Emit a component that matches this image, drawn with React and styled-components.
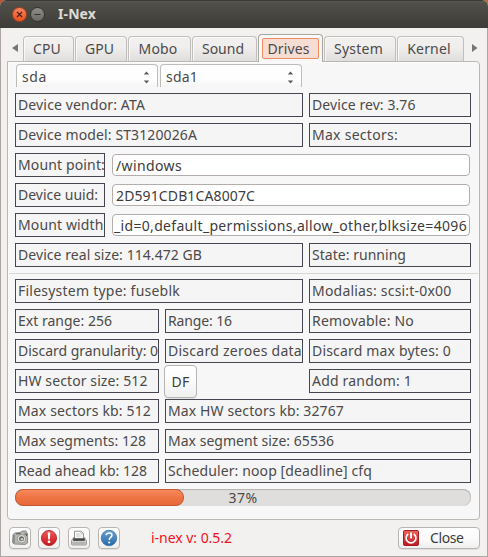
import React, { useLayoutEffect, useRef, useState } from "react";
import styled, { createGlobalStyle, css } from "styled-components";

const Global = createGlobalStyle`
  * { box-sizing: border-box; }
  html, body { margin: 0; background: linear-gradient(90deg, #c0503a, #b96a3c); overflow: hidden; }
  button { font: inherit; color: inherit; padding: 0; margin: 0; }
`;

const Window = styled.div`
  width: 488px;
  height: 557px;
  display: flex;
  flex-direction: column;
  background: #f2f1f0;
  border-radius: 6px 6px 0 0;
  overflow: hidden;
  font-family: "Noto Sans", "Open Sans", sans-serif;
  font-size: 14px;
  line-height: 20px;
  color: #4c4a4a;
  white-space: nowrap;
`;

const TitleBar = styled.header`
  flex: none;
  height: 28px;
  display: flex;
  align-items: center;
  padding-left: 12px;
  background: linear-gradient(#5b5954 0, #504f49 2px, #3d3c38 100%);
  border-top: 1px solid #3a3935;
  color: #dfdbd2;
  font-weight: 700;
  font-size: 14px;
`;

const WindowButton = styled.button`
  width: 15px;
  height: 15px;
  margin-right: 3px;
  border-radius: 50%;
  border: 1px solid ${(p) => (p.$close ? "#a8401f" : "#33322f")};
  background: ${(p) =>
    p.$close
      ? "linear-gradient(#f5835f, #e9531f)"
      : "linear-gradient(#8f8d86, #6b6a64)"};
  display: grid;
  place-items: center;
`;

const Title = styled.h1`
  margin: 0 0 1px 10px;
  font: inherit;
`;

const Body = styled.main`
  flex: 1;
  min-height: 0;
  padding: 6px 7px 0 6px;
  border: 1px solid #aca5a2;
  border-top: 0;
  display: flex;
  flex-direction: column;
`;

const TabBar = styled.nav`
  height: 28px;
  display: flex;
  align-items: flex-end;
  gap: 1px;
  margin-bottom: -1px;
  position: relative;
`;

const Scroll = styled.span`
  width: 15px;
  height: 28px;
  display: flex;
  align-items: center;
  justify-content: ${(p) => (p.$end ? "flex-end" : "center")};
  padding-right: ${(p) => (p.$end ? 2 : 0)}px;
`;

const Tab = styled.button`
  width: ${(p) => p.$width}px;
  height: ${(p) => (p.$active ? 28 : 26)}px;
  padding: ${(p) => (p.$active ? "3px" : "0 3px 0 0")};
  border: 1px solid ${(p) => (p.$active ? "#aaa59c" : "#c1bfbc")};
  border-bottom: ${(p) => (p.$active ? "0" : "1px solid #b9b6b2")};
  border-radius: 4px 4px 0 0;
  background: ${(p) =>
    p.$active ? "#f7f7f7" : "linear-gradient(#f1f0ef, #f0efee 40%, #dfdedc)"};
  box-shadow: inset 1px 1px 0 rgba(255, 255, 255, 0.7);
  display: flex;
  align-items: ${(p) => (p.$active ? "flex-start" : "center")};
  justify-content: center;
`;

const Focus = styled.span`
  flex: 1;
  height: 21px;
  line-height: 19px;
  padding-right: 4px;
  border: 1px solid #f08c5f;
  border-radius: 2px;
  background: #f6ddd4;
  text-align: center;
`;

const Panel = styled.section`
  height: 459px;
  border: 1px solid #bbb7b3;
  border-radius: 0 4px 4px 4px;
  background: #f7f7f7;
  padding: 2px 8px 0 7px;
  box-shadow: inset 1px 1px 0 #fcfcfc;
`;

const Combos = styled.div`
  display: flex;
  gap: 2px;
  padding-left: 1px;
  height: 23px;
  margin-bottom: 6px;
`;

const Combo = styled.div`
  width: 142px;
  padding: 2px 7px 0 5px;
  border: 1px solid #bfbdba;
  border-bottom: 0;
  border-radius: 4px 4px 0 0;
  background: linear-gradient(#fdfdfd, #ffffff 60%, #f5f5f5);
  display: flex;
  align-items: center;
  justify-content: space-between;
`;

const Rows = styled.div`
  display: flex;
  flex-direction: column;
  gap: 6px;
`;

const Row = styled.div`
  display: flex;
  gap: 6px;
  height: 24px;
`;

const Field = styled.div`
  width: ${(p) => p.$width}px;
  height: 24px;
  padding: 0 0 0 2px;
  line-height: 22px;
  border: 1px solid #464650;
  background: #f5f5f5;
  overflow: hidden;
`;

const Input = styled.div`
  width: 358px;
  height: 22px;
  margin: 1px 0 0 1px;
  padding-left: ${(p) => p.$pad || 4}px;
  line-height: 21px;
  border: 1px solid #b3aeab;
  border-radius: 4px;
  background: #fff;
  color: #3c3c3c;
  overflow: hidden;
`;

const Divider = styled.div`
  height: 1px;
  margin: 6px -7px 5px -6px;
  background: #d8d7d6;
`;

const raised = css`
  border: 1px solid #b8b4b1;
  border-radius: 4px;
  background: linear-gradient(#fff, #fbfbfb 50%, #efefef);
  box-shadow: 0 1px 0 rgba(0, 0, 0, 0.07);
`;

const DfButton = styled.button`
  ${raised}
  width: 33px;
  height: 33px;
  margin: -4px 106px 0 -1px;
  color: #3c3c3c;
`;

const Progress = styled.div`
  height: 17px;
  margin-top: 6px;
  display: grid;
  border-radius: 8px;
  background: #dfdedd;
  box-shadow: inset 0 1px 1px #b5b3b1, inset -1px 0 0 #c9c8c6;
  > * { grid-area: 1 / 1; }
`;

const Bar = styled.div`
  height: 17px;
  border: 1px solid #c4582f;
  border-radius: 8px;
  background: linear-gradient(#f58a5f, #ee7443 50%, #e8673a);
`;

const Percent = styled.span`
  text-align: center;
  line-height: 17px;
`;

const Footer = styled.footer`
  display: flex;
  align-items: center;
  padding: 7px 0 0 2px;
`;

const IconButton = styled.button`
  ${raised}
  width: 22px;
  height: 22px;
  margin-right: ${(p) => p.$gap ?? 8}px;
  display: grid;
  place-items: center;
`;

const Version = styled.span`
  color: #f3101b;
  flex: 1;
  margin-left: 23px;
`;

const CloseButton = styled.button`
  ${raised}
  width: 82px;
  height: 22px;
  padding-left: 4px;
  display: flex;
  align-items: center;
  gap: 11px;
  color: #3c3c3c;
`;

const Tracked = styled.span`
  display: inline-block;
  line-height: inherit;
`;

/* Spreads the tracking of a label so that it takes the given width. */
function Text({ w, children }) {
  const ref = useRef(null);
  const [spacing, setSpacing] = useState(0);
  useLayoutEffect(() => {
    const el = ref.current;
    el.style.letterSpacing = "0px";
    const natural = el.getBoundingClientRect().width;
    const next = (w + 1 - natural) / children.length;
    el.style.letterSpacing = `${next}px`;
    setSpacing(next);
  }, [w, children]);
  return (
    <Tracked ref={ref} style={{ letterSpacing: `${spacing}px` }}>
      {children}
    </Tracked>
  );
}

const tabs = [
  ["CPU", 51, 27],
  ["GPU", 52, 28],
  ["Mobo", 63, 38],
  ["Sound", 65, 41],
  ["Drives", 65, 41],
  ["System", 72, 48],
  ["Kernel", 67, 42.5],
];

const deviceRows = [
  [["Device vendor: ATA", 288, 126], ["Device rev: 3.76", 162, 102.5]],
  [["Device model: ST3120026A", 288, 178], ["Max sectors:", 162, 85]],
];

const mountRows = [
  ["Mount point:", 86, "/windows", 65, 3],
  ["Device uuid:", 79, "2D591CDB1CA8007C", 138, 3],
  ["Mount width", 84.5, "_id=0,default_permissions,allow_other,blksize=4096", 352, 1],
];

const fsRows = [
  [["Filesystem type: fuseblk", 288, 161], ["Modalias: scsi:t-0x00", 162, 138.5]],
  [["Ext range: 256", 144, 93], ["Range: 16", 138, 63], ["Removable: No", 162, 101]],
  [
    ["Discard granularity: 0", 144, 139],
    ["Discard zeroes data", 138, 133],
    ["Discard max bytes: 0", 162, 138],
  ],
];

const queueRows = [
  [["Max sectors kb: 512", 144, 132], ["Max HW sectors kb: 32767", 306, 175]],
  [["Max segments: 128", 144, 127], ["Max segment size: 65536", 306, 165]],
  [["Read ahead kb: 128", 144, 128], ["Scheduler: noop [deadline] cfq", 306, 203]],
];

function FieldRow({ cells }) {
  return (
    <Row>
      {cells.map(([text, width, w]) => (
        <Field key={text} $width={width}>
          <Text w={w}>{text}</Text>
        </Field>
      ))}
    </Row>
  );
}

function Choice({ children, w }) {
  return (
    <Combo>
      <Text w={w}>{children}</Text>
      <svg width="7" height="13" viewBox="0 0 7 13" fill="#5c5a58">
        <path d="M3.5 .5 6.2 3.5H.8zM3.5 12.5 .8 9.5h5.4z" />
      </svg>
    </Combo>
  );
}

const CameraIcon = () => (
  <svg width="18" height="16" viewBox="0 0 18 16">
    <path d="M2 4.5 4 3l6-.8 1-1.2h4l1 1.8.6 1V13L14 14.5 3 14 1.5 12.5z" fill="#b5b5b2" stroke="#7c7c79" strokeWidth=".8" />
    <path d="M3 5v8" stroke="#777" strokeWidth="1.2" />
    <path d="M5 3.8h5" stroke="#555" />
    <circle cx="10.5" cy="8.8" r="4.2" fill="#deded9" stroke="#83837f" strokeWidth=".7" />
    <circle cx="10.5" cy="8.8" r="2.5" fill="#686c68" />
    <circle cx="11" cy="9.2" r="1.3" fill="#c9ceca" />
    <path d="M13.5 4h2v2" stroke="#555" fill="none" />
  </svg>
);

const AlertIcon = () => (
  <svg width="18" height="18" viewBox="0 0 18 18">
    <defs>
      <linearGradient id="alert" x2="0" y2="1">
        <stop stopColor="#ef5a55" />
        <stop offset="1" stopColor="#c4181d" />
      </linearGradient>
    </defs>
    <circle cx="9" cy="9" r="7.6" fill="url(#alert)" stroke="#b51d22" strokeWidth=".8" />
    <path d="M7.7 3.5h2.6L9.8 10.4H8.2z" fill="#fff" />
    <circle cx="9" cy="12.8" r="1.4" fill="#fff" />
  </svg>
);

const PrinterIcon = () => (
  <svg width="18" height="18" viewBox="0 0 18 18">
    <path d="M1.5 11.5 4 8h10l2.5 3.5V15q0 1-1 1h-13q-1 0-1-1z" fill="#d0d0cd" stroke="#8a8a88" strokeWidth=".8" />
    <path d="M4.5 2.2h6.7L13.5 4.7V10h-9z" fill="#f8f8f7" stroke="#888" strokeWidth=".9" />
    <path d="M11 2.2v2.6h2.5M6.3 5h3.3M6.3 7h5" stroke="#bbb" fill="none" strokeWidth=".8" />
    <path d="M3.2 9.3h11.6v2.6H3.2z" fill="#484846" />
    <path d="M2.4 14h13.2" stroke="#999" />
  </svg>
);

const HelpIcon = () => (
  <svg width="18" height="18" viewBox="0 0 18 18">
    <defs>
      <linearGradient id="help" x2="0" y2="1">
        <stop stopColor="#69a2d3" />
        <stop offset="1" stopColor="#2869a7" />
      </linearGradient>
    </defs>
    <circle cx="9" cy="9" r="7.8" fill="url(#help)" stroke="#3a70a6" strokeWidth=".7" />
    <path d="M6 6.2C6.6 3.3 12 3.1 12 6.1 12 8.3 9.2 8.4 9.2 11" stroke="#fff" strokeWidth="1.5" fill="none" />
    <circle cx="9.2" cy="13.5" r="1.1" fill="#fff" />
  </svg>
);

const PowerIcon = () => (
  <svg width="16" height="16" viewBox="0 0 16 16">
    <defs>
      <linearGradient id="power" x2="0" y2="1">
        <stop stopColor="#ee675a" />
        <stop offset="1" stopColor="#bd1823" />
      </linearGradient>
    </defs>
    <rect x=".5" y=".5" width="15" height="15" rx="1.3" fill="url(#power)" stroke="#a71b22" />
    <path d="M5.2 4A4.9 4.9 0 1 0 10.8 4" stroke="#fff" strokeWidth="1.6" fill="none" />
    <path d="M8 2.5v6" stroke="#fff" strokeWidth="1.8" />
  </svg>
);

export default function App() {
  return (
    <>
      <Global />
      <Window>
        <TitleBar>
          <WindowButton $close aria-label="Close window">
            <svg width="7" height="7" viewBox="0 0 7 7" stroke="#4a2114" strokeWidth="1.2">
              <path d="M1 1l5 5M6 1 1 6" />
            </svg>
          </WindowButton>
          <WindowButton aria-label="Minimize window">
            <svg width="7" height="7" viewBox="0 0 7 7" stroke="#33322f" strokeWidth="1.2">
              <path d="M.5 3.5h6" />
            </svg>
          </WindowButton>
          <Title>
            <Text w={37}>I-Nex</Text>
          </Title>
        </TitleBar>
        <Body>
          <TabBar>
            <Scroll>
              <svg width="6" height="8" viewBox="0 0 6 8" fill="#777573">
                <path d="M6 0v8L0 4z" />
              </svg>
            </Scroll>
            {tabs.map(([name, width, w]) => {
              const active = name === "Drives";
              return (
                <Tab key={name} $width={width} $active={active}>
                  {active ? (
                    <Focus>
                      <Text w={w}>{name}</Text>
                    </Focus>
                  ) : (
                    <Text w={w}>{name}</Text>
                  )}
                </Tab>
              );
            })}
            <Scroll $end>
              <svg width="6" height="8" viewBox="0 0 6 8" fill="#777573">
                <path d="M0 0v8l5.5-4z" />
              </svg>
            </Scroll>
          </TabBar>
          <Panel>
            <Combos>
              <Choice w={24}>sda</Choice>
              <Choice w={31}>sda1</Choice>
            </Combos>
            <Rows>
              {deviceRows.map((cells) => (
                <FieldRow key={cells[0][0]} cells={cells} />
              ))}
              {mountRows.map(([label, lw, value, vw, pad]) => (
                <Row key={label}>
                  <Field $width={90}>
                    <Text w={lw}>{label}</Text>
                  </Field>
                  <Input $pad={pad}>
                    <Text w={vw}>{value}</Text>
                  </Input>
                </Row>
              ))}
              <FieldRow cells={[["Device real size: 114.472 GB", 288, 183], ["State: running", 162, 93]]} />
            </Rows>
            <Divider />
            <Rows>
              {fsRows.map((cells) => (
                <FieldRow key={cells[0][0]} cells={cells} />
              ))}
              <Row>
                <Field $width={144}>
                  <Text w={128.5}>HW sector size: 512</Text>
                </Field>
                <DfButton>
                  <Text w={17}>DF</Text>
                </DfButton>
                <Field $width={162}>
                  <Text w={99}>Add random: 1</Text>
                </Field>
              </Row>
              {queueRows.map((cells) => (
                <FieldRow key={cells[0][0]} cells={cells} />
              ))}
            </Rows>
            <Progress>
              <Bar style={{ width: "37%" }} />
              <Percent>
                <Text w={28}>37%</Text>
              </Percent>
            </Progress>
          </Panel>
          <Footer>
            <IconButton $gap={7} aria-label="Screenshot">
              <CameraIcon />
            </IconButton>
            <IconButton aria-label="Report">
              <AlertIcon />
            </IconButton>
            <IconButton aria-label="Print">
              <PrinterIcon />
            </IconButton>
            <IconButton aria-label="Help">
              <HelpIcon />
            </IconButton>
            <Version>
              <Text w={80}>i-nex v: 0.5.2</Text>
            </Version>
            <CloseButton>
              <PowerIcon />
              <Text w={32.5}>Close</Text>
            </CloseButton>
          </Footer>
        </Body>
      </Window>
    </>
  );
}
